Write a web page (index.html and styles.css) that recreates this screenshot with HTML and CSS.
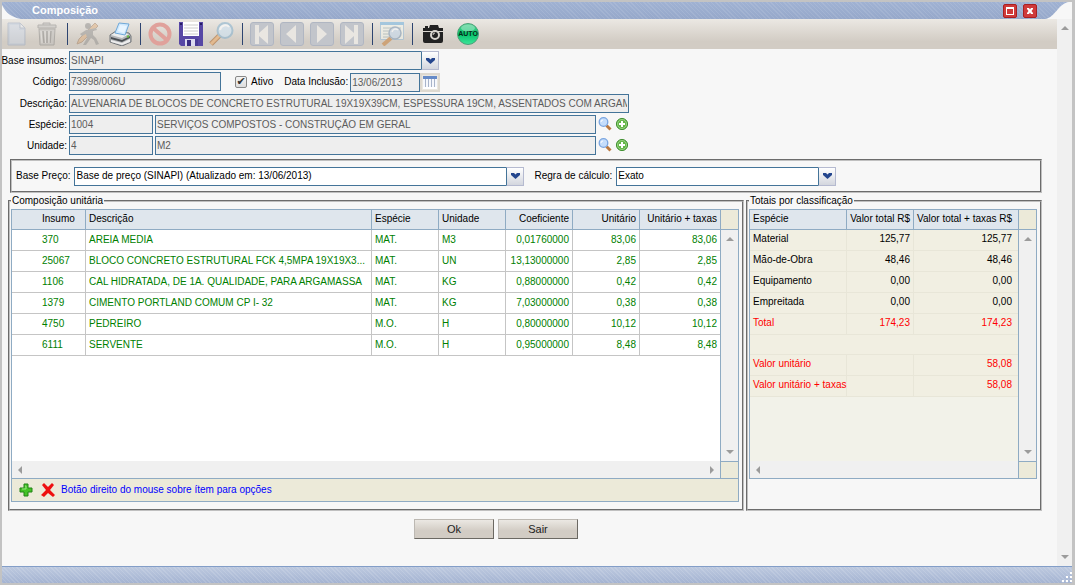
FILE: index.html
```html
<!DOCTYPE html>
<html lang="pt-BR">
<head>
<meta charset="utf-8">
<title>Composição</title>
<link rel="stylesheet" href="styles.css">
</head>
<body>
<div class="window">
  <header class="titlebar">
    <svg class="corner" width="20" height="17" viewBox="0 0 20 17"><path d="M0 3C4 11 9 15 19 17H0z" fill="#f7f7f7"/></svg>
    <h1 class="title">Composição</h1>
    <button class="win-btn" type="button" aria-label="Maximizar"><svg width="14" height="14" viewBox="0 0 14 14"><rect x=".5" y=".5" width="13" height="13" rx="1.5" fill="#cf3a3a" stroke="#a91f22"/><path d="M3 3h8v8H3zM4 5v5h6V5z" fill="#fff" fill-rule="evenodd"/></svg></button>
    <button class="win-btn" type="button" aria-label="Fechar"><svg width="14" height="14" viewBox="0 0 14 14"><rect x=".5" y=".5" width="13" height="13" rx="1.5" fill="#cf3a3a" stroke="#a91f22"/><path d="M4 4h2l1 1.500 1-1.500h2v1L8.500 7 10 9v1H8L7 8.500 6 10H4V9l1.500-2L4 5z" fill="#fff"/></svg></button>
    <svg class="corner-right" width="26" height="17" viewBox="0 0 26 17"><path d="M0 17C10 14 13 1 23 0H26V17z" fill="#f7f7f7"/></svg>
  </header>

  <div class="body">
    <main class="content">
      <nav class="toolbar" aria-label="Ferramentas">
        <div class="group">
          <button class="tool faded" type="button" aria-label="Novo"><svg width="20" height="24" viewBox="0 0 20 24"><path d="M1 1h12l5 5v17H1z" fill="#b9cce8" stroke="#8b9fbf"/><path d="M3 3h9v5h5v13H3z" fill="#ccdaf0"/><path d="M13 1v5h5z" fill="#f4f8ff" stroke="#8b9fbf"/></svg></button>
          <button class="tool faded" type="button" aria-label="Excluir"><svg width="22" height="24" viewBox="0 0 22 24"><path d="M7 3V1h7v2M2 3h18v3H2zM3 7h16l-1 16H4z" fill="#bcbcbc" stroke="#747474"/><path d="M7 9l1 12M11 9v12M15 9l-1 12" stroke="#6d6d6d" stroke-width="1.500"/><path d="M9 9l.5 12M13 9v12M5 9l1 12" stroke="#eee"/></svg></button>
        </div>
        <i class="sep"></i>
        <div class="group wide">
          <button class="tool faded" type="button" aria-label="Editar"><svg width="24" height="24" viewBox="0 0 24 24"><path d="M20 1L4 17l-2 5 5-2L23 4z" fill="#e0a468" stroke="#976b45"/><circle cx="13" cy="4" r="3" fill="#777"/><path d="M11 8l-6 4 2 2 4-2 1 4-4 7h3l5-7 3 2 2 5 3-1-3-6-3-3V9l4-1-1-2-5 1z" fill="#828282"/></svg></button>
          <button class="tool" type="button" aria-label="Imprimir"><svg width="24" height="24" viewBox="0 0 24 24"><path d="M2 13l6-4 13 2 2 3v6l-9 4L2 20z" fill="#b4b6b9" stroke="#73767a"/><path d="M3 13l5-3 13 2-7 4z" fill="#eceded"/><path d="M7 11L11 1l10 1-4 11z" fill="#cfe8fd" stroke="#70a9d8"/><path d="M10 9l2-6 7 1-3 7z" fill="#e8f5ff"/><path d="M3 15l11 3 8-4v2l-8 4-11-3z" fill="#4c5054"/><path d="M3 18l11 3 8-4v3l-8 3-11-3z" fill="#ededed"/><path d="M19 15l2-1" stroke="#69bd46" stroke-width="2"/></svg></button>
        </div>
        <i class="sep"></i>
        <div class="group snug">
          <button class="tool" type="button" aria-label="Cancelar"><svg width="24" height="24" viewBox="0 0 24 24"><circle cx="12" cy="12" r="9.500" fill="none" stroke="#e0a19b" stroke-width="4"/><path d="M5 6l14 12" stroke="#e0a19b" stroke-width="4"/></svg></button>
          <button class="tool" type="button" aria-label="Salvar"><svg width="24" height="24" viewBox="0 0 24 24"><path d="M0 0h24v24H2l-2-2z" fill="#5747a5"/><path d="M4 0h16v14H4z" fill="#fff"/><path d="M5 3h14M5 6h14M5 9h14M5 12h14" stroke="#ccc"/><path d="M6 17h13v7H6z" fill="#dcdaf0"/><path d="M8 18h4v6H8z" fill="#3b2d83"/><path d="M16 17h3v7h-3z" fill="#4a3b96"/><path d="M1 1h2v2H1zm20 0h2v2h-2z" fill="#261d64"/></svg></button>
          <button class="tool faded-light" type="button" aria-label="Pesquisar"><svg width="26" height="24" viewBox="0 0 26 24"><path d="M11 13l-9 9" stroke="#ad6c30" stroke-width="5"/><path d="M11 13l-9 9" stroke="#edae6d" stroke-width="3"/><circle cx="16" cy="8.500" r="7.500" fill="#cfe4f4" stroke="#89b3ce" stroke-width="2"/><path d="M11 8c1-5 7-6 9-3" fill="none" stroke="#fff" stroke-width="2"/></svg></button>
        </div>
        <i class="sep"></i>
        <div class="group">
          <button class="tool" type="button" aria-label="Primeiro"><svg width="24" height="24" viewBox="0 0 24 24"><rect x=".5" y=".5" width="23" height="23" rx="2.500" fill="#c2c5cb" stroke="#b0b6c2"/><path d="M5 3h4v8l9-8v19l-9-8v8H5z" fill="#e9e6e1"/></svg></button>
          <button class="tool" type="button" aria-label="Anterior"><svg width="24" height="24" viewBox="0 0 24 24"><rect x=".5" y=".5" width="23" height="23" rx="2.500" fill="#c2c5cb" stroke="#b0b6c2"/><path d="M16 3v18L6 12z" fill="#e9e6e1"/></svg></button>
          <button class="tool" type="button" aria-label="Próximo"><svg width="24" height="24" viewBox="0 0 24 24"><rect x=".5" y=".5" width="23" height="23" rx="2.500" fill="#c2c5cb" stroke="#b0b6c2"/><path d="M7 3v18l10-9z" fill="#e9e6e1"/></svg></button>
          <button class="tool" type="button" aria-label="Último"><svg width="24" height="24" viewBox="0 0 24 24"><rect x=".5" y=".5" width="23" height="23" rx="2.500" fill="#c2c5cb" stroke="#b0b6c2"/><path d="M5 3l9 8V3h4v19h-4v-8l-9 8z" fill="#e9e6e1"/></svg></button>
        </div>
        <i class="sep"></i>
        <div class="group">
          <button class="tool faded-light" type="button" aria-label="Visualizar"><svg width="24" height="24" viewBox="0 0 24 24"><path d="M.5.500h23v17H.500z" fill="#f5f7ed" stroke="#9bbcd6"/><path d="M0 0h24v3H0z" fill="#79b5de"/><path d="M3 6h8M3 9h6M3 12h7M3 15h6M14 6h7" stroke="#a0b2b5"/><path d="M11 16l-8 7" stroke="#cb8846" stroke-width="4"/><circle cx="15" cy="11" r="6" fill="#c6d9ed" stroke="#879fb9" stroke-width="1.500"/><path d="M12 10c1-3 4-4 6-2" fill="none" stroke="#fff" stroke-width="1.500"/></svg></button>
        </div>
        <i class="sep"></i>
        <div class="group last">
          <button class="tool" type="button" aria-label="Foto"><svg width="20" height="20" viewBox="0 0 20 20"><path d="M0 4h2V2h3v2h1l1-3h8l1 3h4v3H0zM0 8h20v9q0 2-2 2H2q-2 0-2-2z" fill="#222"/><circle cx="12" cy="11" r="4" fill="#222" stroke="#d8d4ce" stroke-width="2"/><path d="M10 11q0-2 2-2" fill="none" stroke="#d8d4ce"/></svg></button>
          <button class="tool" type="button" aria-label="Automático"><svg width="22" height="22" viewBox="0 0 22 22"><defs><linearGradient id="auto" x2="0" y2="1"><stop stop-color="#55d495"/><stop offset=".5" stop-color="#05c46b"/><stop offset="1" stop-color="#3ee59a"/></linearGradient></defs><circle cx="11" cy="11" r="10.500" fill="url(#auto)" stroke="#4e9f79"/><ellipse cx="11" cy="5" rx="7" ry="3.500" fill="#a2e5c5" opacity=".6"/><text x="11" y="13" text-anchor="middle" class="auto-text">AUTO</text></svg></button>
        </div>
      </nav>

      <form class="form">
        <div class="row">
          <label class="lead" for="base">Base insumos:</label>
          <div class="combo locked w-base"><select id="base"><option>SINAPI</option></select><span class="arrow"><svg width="9" height="6" viewBox="0 0 9 6"><path d="M0 0h3l1.500 1.500L6 0h3v2L4.500 6 0 2z" fill="#24468e"/></svg></span></div>
        </div>
        <div class="row">
          <label class="lead" for="codigo">Código:</label>
          <input class="field w-code" id="codigo" type="text" value="73998/006U" readonly>
          <div class="check"><input class="tick" id="ativo" type="checkbox" checked><label for="ativo">Ativo</label></div>
          <label class="date-label" for="data">Data Inclusão:</label>
          <div class="date"><input class="field w-date" id="data" type="text" value="13/06/2013" readonly><button class="calendar" type="button" aria-label="Calendário"><svg width="14" height="13" viewBox="0 0 14 13"><path d="M0 0h14v13H0z" fill="#f6f8fc"/><path d="M0 0h14v3H0z" fill="#668bc7"/><path d="M2.500 3v9M5.500 3v9M8.500 3v9M11.500 3v9" stroke="#a8b4ca"/><path d="M0 11h14v2H0z" fill="#fff"/></svg></button></div>
        </div>
        <div class="row">
          <label class="lead" for="descricao">Descrição:</label>
          <input class="field w-desc" id="descricao" type="text" value="ALVENARIA DE BLOCOS DE CONCRETO ESTRUTURAL 19X19X39CM, ESPESSURA 19CM, ASSENTADOS COM ARGAMASSA" readonly>
        </div>
        <div class="row">
          <label class="lead" for="especie">Espécie:</label>
          <input class="field w-id" id="especie" type="text" value="1004" readonly>
          <input class="field w-name" type="text" value="SERVIÇOS COMPOSTOS - CONSTRUÇÃO EM GERAL" aria-label="Nome da espécie" readonly>
          <button class="mini" type="button" aria-label="Pesquisar espécie"><svg width="14" height="14" viewBox="0 0 14 14"><path d="M8.500 8.500l4 4" stroke="#b97840" stroke-width="3"/><circle cx="5.500" cy="5" r="4.300" fill="#c5ddfb" stroke="#7aa5e0" stroke-width="1.300"/><path d="M3 5q0-2 2-2" fill="none" stroke="#fff"/></svg></button>
          <button class="mini" type="button" aria-label="Adicionar espécie"><svg width="14" height="14" viewBox="0 0 14 14"><circle cx="7" cy="7" r="5.600" fill="#62b546" stroke="#449235"/><circle cx="7" cy="7" r="4.500" fill="none" stroke="#a4da91" stroke-width=".8"/><path d="M7 4v6M4 7h6" stroke="#fff" stroke-width="2"/></svg></button>
        </div>
        <div class="row">
          <label class="lead" for="unidade">Unidade:</label>
          <input class="field w-id" id="unidade" type="text" value="4" readonly>
          <input class="field w-name" type="text" value="M2" aria-label="Nome da unidade" readonly>
          <button class="mini" type="button" aria-label="Pesquisar unidade"><svg width="14" height="14" viewBox="0 0 14 14"><path d="M8.500 8.500l4 4" stroke="#b97840" stroke-width="3"/><circle cx="5.500" cy="5" r="4.300" fill="#c5ddfb" stroke="#7aa5e0" stroke-width="1.300"/><path d="M3 5q0-2 2-2" fill="none" stroke="#fff"/></svg></button>
          <button class="mini" type="button" aria-label="Adicionar unidade"><svg width="14" height="14" viewBox="0 0 14 14"><circle cx="7" cy="7" r="5.600" fill="#62b546" stroke="#449235"/><circle cx="7" cy="7" r="4.500" fill="none" stroke="#a4da91" stroke-width=".8"/><path d="M7 4v6M4 7h6" stroke="#fff" stroke-width="2"/></svg></button>
        </div>
      </form>

      <section class="prices">
        <label for="preco">Base Preço:</label>
        <div class="combo w-price"><select id="preco"><option>Base de preço (SINAPI) (Atualizado em: 13/06/2013)</option></select><span class="arrow"><svg width="9" height="6" viewBox="0 0 9 6"><path d="M0 0h3l1.500 1.500L6 0h3v2L4.500 6 0 2z" fill="#24468e"/></svg></span></div>
        <label class="rule-label" for="regra">Regra de cálculo:</label>
        <div class="combo w-rule"><select id="regra"><option>Exato</option></select><span class="arrow"><svg width="9" height="6" viewBox="0 0 9 6"><path d="M0 0h3l1.500 1.500L6 0h3v2L4.500 6 0 2z" fill="#24468e"/></svg></span></div>
      </section>

      <div class="panels">
        <fieldset class="panel">
          <legend>Composição unitária</legend>
          <div class="grid">
            <div class="sheet">
              <table class="items">
                <colgroup><col class="c-code"><col><col class="c-num"><col class="c-num"><col class="c-num"><col class="c-num"><col class="c-tax"></colgroup>
                <thead><tr><th class="code">Insumo</th><th>Descrição</th><th>Espécie</th><th>Unidade</th><th class="num">Coeficiente</th><th class="num">Unitário</th><th class="num">Unitário + taxas</th></tr></thead>
                <tbody>
                  <tr><td class="code">370</td><td>AREIA MEDIA</td><td>MAT.</td><td>M3</td><td class="num">0,01760000</td><td class="num">83,06</td><td class="num">83,06</td></tr>
                  <tr><td class="code">25067</td><td>BLOCO CONCRETO ESTRUTURAL FCK 4,5MPA 19X19X3...</td><td>MAT.</td><td>UN</td><td class="num">13,13000000</td><td class="num">2,85</td><td class="num">2,85</td></tr>
                  <tr><td class="code">1106</td><td>CAL HIDRATADA, DE 1A. QUALIDADE, PARA ARGAMASSA</td><td>MAT.</td><td>KG</td><td class="num">0,88000000</td><td class="num">0,42</td><td class="num">0,42</td></tr>
                  <tr><td class="code">1379</td><td>CIMENTO PORTLAND COMUM CP I- 32</td><td>MAT.</td><td>KG</td><td class="num">7,03000000</td><td class="num">0,38</td><td class="num">0,38</td></tr>
                  <tr><td class="code">4750</td><td>PEDREIRO</td><td>M.O.</td><td>H</td><td class="num">0,80000000</td><td class="num">10,12</td><td class="num">10,12</td></tr>
                  <tr><td class="code">6111</td><td>SERVENTE</td><td>M.O.</td><td>H</td><td class="num">0,95000000</td><td class="num">8,48</td><td class="num">8,48</td></tr>
                </tbody>
              </table>
              <div class="hscroll"><i class="tri left"></i><i class="tri right"></i></div>
            </div>
            <div class="rail"><i class="cap"></i><div class="vscroll"><i class="tri up"></i><i class="tri down"></i></div><i class="foot"></i></div>
          </div>
          <div class="actions">
            <button class="mini" type="button" aria-label="Adicionar item"><svg width="14" height="14" viewBox="0 0 14 14"><path d="M5 1h4v4h4v4H9v4H5V9H1V5h4z" fill="#43c326" stroke="#238316"/><path d="M6 3h1v3H3" fill="none" stroke="#96e67e"/></svg></button>
            <button class="mini" type="button" aria-label="Remover item"><svg width="14" height="14" viewBox="0 0 14 14"><path d="M1 2l2-2 4 4 4-4 2 2-4 5 5 5-2 2-5-4-4 4-3-2 5-5z" fill="#ee1010"/></svg></button>
            <span>Botão direito do mouse sobre ítem para opções</span>
          </div>
        </fieldset>

        <fieldset class="panel totals-panel">
          <legend>Totais por classificação</legend>
          <div class="grid">
            <div class="sheet tinted">
              <table class="totals">
                <colgroup><col class="c-kind"><col class="c-num"><col></colgroup>
                <thead><tr><th>Espécie</th><th class="num">Valor total R$</th><th class="num">Valor total + taxas R$</th></tr></thead>
                <tbody>
                  <tr><td>Material</td><td class="num">125,77</td><td class="num">125,77</td></tr>
                  <tr><td>Mão-de-Obra</td><td class="num">48,46</td><td class="num">48,46</td></tr>
                  <tr><td>Equipamento</td><td class="num">0,00</td><td class="num">0,00</td></tr>
                  <tr><td>Empreitada</td><td class="num">0,00</td><td class="num">0,00</td></tr>
                  <tr class="red"><td>Total</td><td class="num">174,23</td><td class="num">174,23</td></tr>
                  <tr class="blank"><td colspan="3"></td></tr>
                  <tr class="red"><td>Valor unitário</td><td></td><td class="num">58,08</td></tr>
                  <tr class="red"><td>Valor unitário + taxas</td><td></td><td class="num">58,08</td></tr>
                </tbody>
              </table>
              <div class="hscroll"><i class="tri left"></i></div>
            </div>
            <div class="rail"><i class="cap"></i><div class="vscroll"><i class="tri up"></i><i class="tri down"></i></div><i class="foot"></i></div>
          </div>
        </fieldset>
      </div>

      <div class="buttons"><button class="push" type="button">Ok</button><button class="push" type="button">Sair</button></div>
    </main>
    <div class="page-scroll"><i class="tri up"></i><i class="tri down"></i></div>
  </div>

  <footer class="status"><svg width="10" height="10" viewBox="0 0 10 10"><path d="M8 0h2v2H8zM4 4h2v2H4zm4 0h2v2H8zM0 8h2v2H0zm4 0h2v2H4zm4 0h2v2H8z" fill="#fff"/></svg></footer>
</div>
</body>
</html>
```
FILE: styles.css
```css
* { box-sizing: border-box; }
body { margin: 0; font: 10px/12px "Liberation Sans", Arial, sans-serif; color: #000; }
button, input, select { font: inherit; color: inherit; margin: 0; }
button { padding: 0; border: 0; background: none; }
svg { display: block; flex: none; }

.window { min-height: 100vh; display: flex; flex-direction: column; background: #f7f7f7; border: 2px solid #c3c3c3; border-right-width: 3px; }
.titlebar { display: flex; align-items: center; height: 17px; background: repeating-linear-gradient(45deg, #ffffff18 0 1px, transparent 1px 3px), linear-gradient(#a0b2d3, #96a8ca); }
.title { flex: 1; margin: 0; padding-left: 10px; font-size: 11px; line-height: 17px; color: #fff; }
.win-btn { margin-right: 6px; }
.corner-right { margin-left: 3px; }

.body { flex: 1; display: flex; }
.content { flex: 1; min-width: 0; }
.page-scroll { width: 15px; background: #f0f0f0; display: flex; flex-direction: column; align-items: center; justify-content: space-between; padding: 7px 0; }

.toolbar { display: flex; align-items: center; height: 30px; background: linear-gradient(#ebe8e3, #d2ccc4 75%); }
.group { display: flex; }
.wide { gap: 3px; }
.snug { gap: 1px; }
.last { gap: 5px; padding-left: 1px; }
.tool { width: 30px; height: 26px; display: flex; align-items: center; justify-content: center; }
.faded { opacity: .4; }
.faded-light { opacity: .6; }
.sep { width: 10px; height: 22px; display: flex; justify-content: center; }
.sep::before { content: ""; width: 1px; background: #2d4470; }
.auto-text { font: bold 7px "Liberation Sans", Arial, sans-serif; fill: #062e1a; }

.form { padding-top: 2px; display: flex; flex-direction: column; gap: 2px; }
.row { display: flex; gap: 2px; align-items: flex-start; }
.lead { width: 65px; line-height: 19px; text-align: right; white-space: nowrap; display: flex; justify-content: flex-end; }
.field { height: 19px; padding: 0 1px; border: 1px solid #447499; border-radius: 0; background: #eee; color: #5c5c5c; }
.w-code { width: 152px; }
.w-date { width: 70px; }
.w-desc { width: 560px; }
.w-id { width: 84px; }
.w-name { width: 441px; }
.w-base { width: 370px; }
.w-price { width: 450px; }
.w-rule { width: 220px; }
.check { display: flex; align-items: center; gap: 4px; height: 19px; margin-left: 12px; }
.tick { width: 12px; height: 12px; appearance: none; border: 1px solid #888; border-radius: 2px; background: linear-gradient(#f4f4f4, #ddd); display: grid; place-items: center; }
.tick:checked::before { content: "✔"; font: 11px/10px "DejaVu Sans", sans-serif; color: #333; }
.date-label { margin-left: 9px; line-height: 20px; }
.date { display: flex; padding-top: 1px; }
.calendar { width: 20px; height: 19px; display: flex; align-items: center; justify-content: center; border: 2px solid #ddd9d0; background: #eae7df; }
.mini { width: 14px; height: 18px; display: flex; align-items: center; justify-content: center; }
.row .mini + .mini { margin-left: 1px; }

.combo { display: grid; }
.combo select { grid-area: 1 / 1; width: 100%; height: 19px; padding: 0 19px 0 1px; appearance: none; border: 1px solid #447499; border-radius: 0; background: #fff; color: #000; }
.combo.locked select { background: #eee; color: #5c5c5c; }
.arrow { grid-area: 1 / 1; justify-self: end; width: 18px; height: 19px; display: flex; align-items: center; justify-content: center; pointer-events: none; border: 1px solid #b5bad0; border-left-color: #447499; background: linear-gradient(#fff, #d3d6de); }

.prices { display: flex; align-items: center; margin: 4px 15px 0 8px; padding: 6px 4px; height: 34px; border: 2px groove #c0c0c0; }
.prices label { margin-right: 4px; white-space: nowrap; }
.prices .rule-label { margin-left: 10px; }

.panels { display: flex; gap: 2px; margin: 2px 15px 0 6px; align-items: stretch; }
.panel { flex: 1; min-width: 0; margin: 0; padding: 2px 3px 7px 1px; border: 2px groove #c0c0c0; }
.totals-panel { flex: none; width: 296px; }
legend { padding: 0 1px; line-height: 12px; }
.grid { display: flex; border: 1px solid #8fabc3; background: #fff; }
.sheet { flex: 1; min-width: 0; min-height: 268px; display: flex; flex-direction: column; }
.tinted { background: #f2f2e9; }
table { width: 100%; table-layout: fixed; border-spacing: 0; }
th, td { height: 21px; padding: 0 3px; text-align: left; font-weight: normal; white-space: nowrap; border-right: 1px solid #c5c5c5; border-bottom: 1px solid #c5c5c5; }
th { height: 20px; background: #dfe6ed; border-color: #8fabc3; padding-bottom: 1px; }
.items td { color: #008000; }
.num { text-align: right; }
.code { padding-left: 30px; }
th:last-child, td:last-child { border-right: 0; }
.totals td { background: #f1efe2; border-color: #e8e6d8; padding-bottom: 2px; }
.totals .num:last-child { padding-right: 6px; }
.totals .red td { color: #f00; }
.totals .blank td { height: 20px; padding: 0; }
.c-code { width: 74px; }
.c-num { width: 67px; }
.c-tax { width: 80px; }
.c-kind { width: 97px; }
.hscroll { margin-top: auto; height: 17px; padding: 0 6px; background: #f0f0f0; display: flex; align-items: center; justify-content: space-between; }
.rail { width: 18px; display: flex; flex-direction: column; border-left: 1px solid #8fabc3; }
.cap { height: 20px; background: #ecead9; border-bottom: 1px solid #8fabc3; }
.foot { height: 17px; background: #ecead9; border-top: 1px solid #8fabc3; }
.vscroll { flex: 1; background: #f0f0f0; display: flex; flex-direction: column; align-items: center; justify-content: space-between; padding: 7px 0; }
.tri { width: 0; height: 0; border: 0 solid transparent; }
.up { border-width: 0 4px 4px; border-bottom-color: #9b9b9b; }
.down { border-width: 4px 4px 0; border-top-color: #9b9b9b; }
.left { border-width: 4px 4px 4px 0; border-right-color: #9b9b9b; }
.right { border-width: 4px 0 4px 4px; border-left-color: #9b9b9b; }
.actions { display: flex; align-items: center; height: 23px; padding-left: 7px; gap: 8px; background: #ecead9; border: 1px solid #8fabc3; border-top: 0; color: #00f; }
.actions span { margin-left: -2px; }

.buttons { display: flex; justify-content: center; gap: 4px; margin-top: 8px; padding-right: 67px; }
.push { width: 80px; height: 20px; font-size: 11px; color: #222; border: 1px solid #bcb8b2; border-right-color: #6b6862; border-bottom-color: #6b6862; background: linear-gradient(#ebe8e3, #d2ccc4 60%); }
.status { height: 17px; display: flex; justify-content: flex-end; align-items: flex-end; padding-bottom: 1px; border-top: 1px solid #839ec8; background: repeating-linear-gradient(45deg, #ffffff20 0 1px, transparent 1px 3px), linear-gradient(#bdc9df, #a5b4d2); }
```
